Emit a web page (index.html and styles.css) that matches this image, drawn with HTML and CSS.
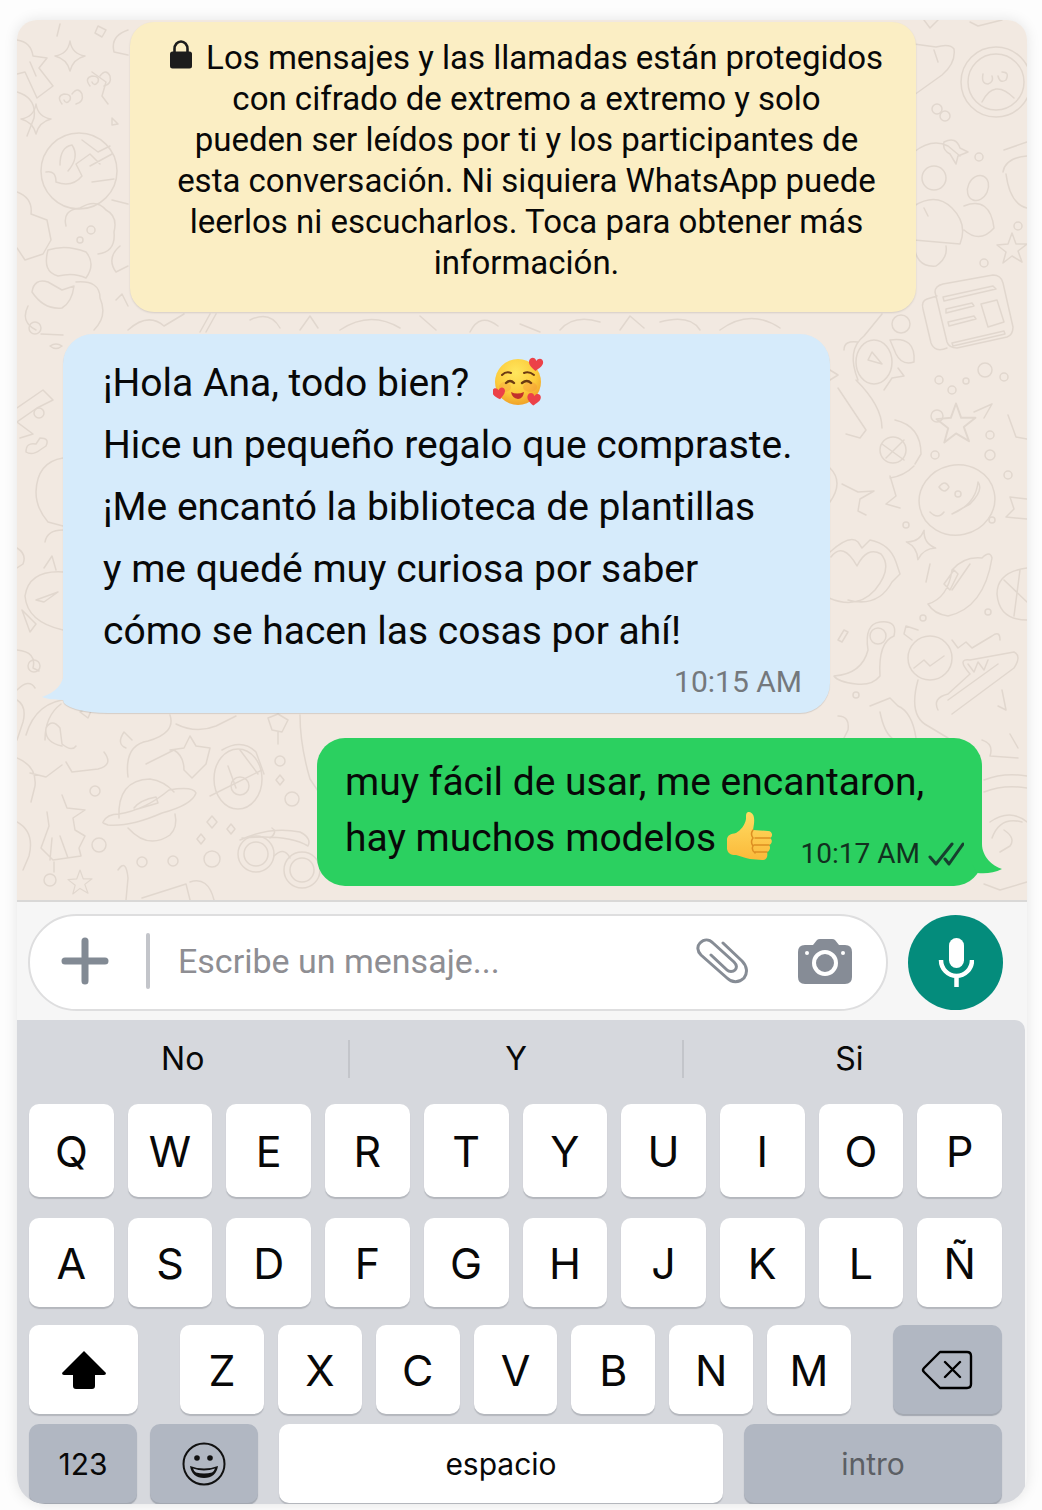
FILE: index.html
```html
<!DOCTYPE html>
<html lang="es">
<head>
    <meta charset="UTF-8">
    <meta name="viewport" content="width=device-width, initial-scale=1.0">
    <title>Chat</title>
    <link rel="stylesheet" href="styles.css">
</head>
<body>
    <main class="phone">
        <!-- Conversación -->
        <section class="chat">
            <svg class="chat-doodles" viewBox="17 20 1010 881" preserveAspectRatio="xMinYMin slice" aria-hidden="true">
                <defs>
                    <path id="star" d="M0-15-4-4-15-3-6 4-9 15 0 8 10 14 6 3 15-4 4-4Z"/>
                    <path id="spark" d="M0-15Q2-2 15 0 3 3 0 15-3 3-15 0-2-2 0-15Z"/>
                    <path id="curl" d="M-8 6q-6-8 2-10 8 0 6 6-4 5-6 0M2-4q6-8 10 0 2 8-6 10"/>
                </defs>
                <!-- Izquierda -->
                <use href="#spark" x="70" y="56"/>
                <path d="M17 40q14 2 16 16l14 2-8 10 14 18-16 12-12-26-8 2M60 24l-3 12M98 26l8 4-4 7-7-4ZM128 30q-18 6-14 22l14 3M30 62l6 14M17 92q20 6 17 26l-7 18"/>
                <use href="#spark" x="36" y="119"/>
                <use href="#curl" x="70" y="98"/>
                <use href="#curl" x="98" y="80"/>
                <path d="M92 72l14 10-4 14 6 8M112 118l6 6-6 1Z"/>
                <circle cx="79" cy="171" r="38"/>
                <path d="M46 172q10-2 10 10 16 6 26-6l-6-12 14-10 10 10M60 165q0-18 12-20 8 12-4 26M82 140l16 12 12-6M90 166l22-12M92 182l22-3"/>
                <path d="M66 226q-4-16 14-18 16-10 26 2 12 6 8 22 2 20-16 22M17 192q16 6 14 22l16 6 4 20-8 14-18 6-8-12M48 250q-6 22 10 26 16-4 28 2 10-14 0-26-20-8-38-2ZM112 200l16 4M120 246q-14 12-4 26l12-6M32 292q2-14 16-10l14 8 12-4q-2 16-12 22-18 2-30-16ZM76 282q24-2 24 16 8 18-6 32M28 306q-8 16 8 24M116 300l6-6 6 12"/>
                <circle cx="91" cy="230" r="4"/>
                <circle cx="80" cy="240" r="3"/>
                <circle cx="35" cy="328" r="6"/>
                <path d="M41 334l22 1M50 346q6-4 12 0-6 5-12 0ZM17 408l26-18 10 10-16 8-20 14 16 12-13 4M40 450q-8 6-14 2 0-10 10-8l4-6q10 0 6 8ZM63 458q-26 4-27 34 0 16 12 30l15 4M63 530q-16 0-18 12M17 548q10 6 6 16l-6 4M44 568l8-12 4 14M63 572q-34-2-38 24 2 26 38 34M36 600l22-8-14 10ZM22 610l14 14-6 8ZM17 650q20 2 16 18l6 3M17 690q12-12 18-2"/>
                <circle cx="39" cy="413" r="5"/>
                <circle cx="34" cy="666" r="6"/>
                <path d="M128 330q20-18 36-4l20-12M210 314l-10 18M216 314l-10 18M250 320q20-10 30 8M300 330l10-14 8 12M340 330q30-20 60-2M420 316l16 14M470 332q10-20 28-6M520 324l20 8M560 330q14-16 40-8M620 330l10-14 14 12M660 322q30-8 40 8M720 330q30-22 60-2"/>
                <!-- Abajo -->
                <path d="M26 735q10-34 44-36 14 2 28 10M45 740q0-24 16-36M62 746q-18-4-16-18 6-10 14 0l2 16q10 8 14 2M17 700q10 6 6 22l-6 18M66 762l6 10 26-3q16-4 6-17M62 765l-16 12-16-4M17 758q20 8 18 28l-4 16M80 712l14-8-6 14ZM170 715q6 18-22 26-24 4-20 36M146 764l28-14q10 6 10 20l8 8 14-14 4-16-14-2-6-10-6 12-14 2M176 724q20 10 40 2l20-10M300 715q0 30 10 64l8 12"/>
                <path d="M132 740l-8-8q-8 12 2 16"/>
                <circle cx="95" cy="791" r="5"/>
                <circle cx="99" cy="845" r="7"/>
                <circle cx="142" cy="862" r="5"/>
                <circle cx="173" cy="861" r="5"/>
                <circle cx="212" cy="859" r="8"/>
                <circle cx="280" cy="761" r="5"/>
                <circle cx="292" cy="799" r="7"/>
                <path d="M119 818q-2-38 31-39 14 2 24 13M128 828q20 22 42 7 8-8 5-21M103 822q4-8 16-8 26-4 50-24 24-4 27 3-4 12-34 20-32 14-54 12-6-2-5-3ZM134 808q6-8 22-11l2 6-24 7"/>
                <ellipse cx="238" cy="779" rx="24" ry="30"/>
                <path d="M210 796l52-26M222 750q20-12 34 2l8 22M240 750l18 24M228 766l8 22"/>
                <circle cx="240" cy="786" r="9"/>
                <path d="M62 795l5 13 18 2-12 8 2 12 10 6-6 12 2 8-28 4-12-12 8-22-2-14M60 836l8 22M52 838l-2 22"/>
                <circle cx="50" cy="880" r="6"/>
                <path d="M54 862v10M212 816l5 6-5 6-5-6ZM201 834l4 5-4 5-4-5ZM280 775l4 5-4 5-4-5ZM231 824l4 5-4 5-4-5ZM268 718l10-4 10 6-6 12-10-2ZM278 732v12"/>
                <circle cx="256" cy="854" r="18"/>
                <circle cx="256" cy="854" r="12"/>
                <circle cx="302" cy="870" r="18"/>
                <circle cx="302" cy="870" r="12"/>
                <path d="M240 840q30-14 60-8 12 6 8 14-20-12-66-8M274 856q10-10 16 2M118 870q8-12 10 8l-2 22M142 898l44-14 4 16M190 882q18-6 24 18M270 838q8-6 2-10M17 822q18 10 12 34l-6 14"/>
                <use href="#star" transform="translate(80 882) scale(.8)"/>
                <!-- Derecha -->
                <circle cx="996" cy="82" r="35"/>
                <circle cx="996" cy="82" r="28"/>
                <path d="M983 74q-2 10 5 10 6-2 4-8M998 76q2 8 8 4 4-8-4-8M982 102q12-24 32-4M914 44l22 3q14-4 18 2 2 14-12 26l-28 20M934 50l4 12M924 20l6 8 8-8M970 22l8 4 24-6"/>
                <circle cx="937" cy="109" r="5"/>
                <circle cx="945" cy="116" r="5"/>
                <circle cx="979" cy="157" r="4"/>
                <circle cx="934" cy="178" r="12"/>
                <ellipse cx="978" cy="188" rx="10" ry="13" transform="rotate(25 978 188)"/>
                <path d="M914 152q18-14 34-6l12 10M944 142q12-6 16 6l8 4-10 4-2 8-6-10q-8-4-6-12ZM914 206q22-14 38 2 16 16 8 36l-46-4M964 206q26-10 30 22-14 16-30 2M914 240q0 28 22 26 12-8 10-20M924 208l4 8M1004 150l23-8M1003 172q2-14 24-16M1006 174q4 30 21 34"/>
                <use href="#star" x="1012" y="248"/>
                <circle cx="1018" cy="226" r="4"/>
                <circle cx="984" cy="263" r="4"/>
                <path d="M935 292q0-6 8-8l50-9q8 0 10 8l10 44q0 8-6 10l-50 11q-8 0-10-6l-12-50ZM937 296l-10 3q-6 2-4 10l8 34q4 10 16 5M943 297l50-11 3 3-52 12ZM946 309l26-6 2 3-28 7ZM948 322l26-6 2 3-27 7ZM952 343l52-12 1 3-52 12ZM981 304l16-4 7 22-16 5Z"/>
                <circle cx="901" cy="324" r="9"/>
                <ellipse cx="874" cy="362" rx="18" ry="22"/>
                <path d="M858 380q-12-30 6-44l18-22M844 350q0-10 14-8M890 340q26-4 24 22-12 4-18-8ZM884 390l8-12 12-2-6-8M868 360l4-8 10 12ZM856 380q26 26 26 48M838 388l28 42-6 8-14-4M830 370l8 5-8 5"/>
                <circle cx="939" cy="380" r="4"/>
                <circle cx="952" cy="390" r="4"/>
                <circle cx="966" cy="381" r="3"/>
                <circle cx="985" cy="370" r="7"/>
                <circle cx="1004" cy="377" r="4"/>
                <circle cx="937" cy="416" r="6"/>
                <circle cx="990" cy="435" r="4"/>
                <circle cx="990" cy="455" r="5"/>
                <circle cx="935" cy="455" r="4"/>
                <circle cx="1008" cy="475" r="4"/>
                <use href="#star" transform="translate(956 423) scale(1.3)"/>
                <circle cx="893" cy="450" r="13"/>
                <path d="M895 420q26 6 26 34l-6 10M882 444l22 16M904 440l-18 18M984 418l8-14-18 8M1008 415l8 22 11 2M842 484l16 8 16-1-14 8-2 12 8 4M890 476l6 20-10 8 14 4M830 468q14 14 0 34M890 478q14-2 24-12"/>
                <ellipse cx="957" cy="500" rx="38" ry="35" transform="rotate(-12 957 500)"/>
                <path d="M952 514q24-10 26-32 6 8-8 22ZM939 487q6-8 10 0-4 8-10 0M930 512q8 8 14 0"/>
                <circle cx="958" cy="494" r="3"/>
                <path d="M1010 497l17 2M1010 497l4 12-8 8 21 2"/>
                <use href="#spark" x="921" y="545" transform="rotate(12 921 545)"/>
                <circle cx="906" cy="525" r="3"/>
                <circle cx="992" cy="520" r="3"/>
                <path d="M831 557q12-16 26 9 10-20 24-12 12 14-6 36-18 20-46 8M830 552q20-18 28-10l4 6 8-8q20 4 26 22l4 12-8 8q-14 26-44 18M928 604q20-6 24-34 12-14 30-12 8-8 10 0-8 50-44 58-14-2-20-12ZM952 590l18-26M944 584l10-14 4 4-8 16ZM930 564l-4 18M1027 568q-30 4-30 26 2 26 30 26M1004 580l23 22M1020 570l-6 46"/>
                <circle cx="923" cy="618" r="3"/>
                <circle cx="988" cy="612" r="3"/>
                <path d="M834 676q28-2 34-26-4-26 12-28 18-2 14 14-16 6-14 40-8 10-24 8-18-2-22-8ZM838 640l6-10 4 2-6 10Z"/>
                <circle cx="878" cy="636" r="8"/>
                <circle cx="930" cy="658" r="22"/>
                <path d="M912 640l-8-6 2-8 12 4M914 668l10-8 6 6 14-10M952 640l6 8 8-6 6 6 10-6 10-6q8-6 8 4M938 710q-6-12 10-16l22-20q-14-16 0-14l44-8q8 4 0 16l-62 46M948 700l50-36M968 664l6 8 4-10 6 8 4-10M870 706l20-8 8 8q14 6 18 32M880 712q4 20 12 26M918 680q-10 36 10 46l20 12M1002 690l4 20-8-4M838 716q12 0 10 14l-4 8"/>
                <circle cx="856" cy="695" r="3"/>
                <path d="M982 740q12 4 8 16l28 2M1010 734l8 14M984 780q20-8 43-4M984 792q20-8 43-4M990 822q20-14 37 0M992 838q8-22 30-16M1004 830q12 8 6 16l-10 6M984 884l16 6 27-8"/>
            </svg>

            <div class="notice">
                <svg class="notice-lock" viewBox="0 0 22 29" aria-hidden="true">
                    <path d="M4.500 13V9a6.500 7.500 0 0 1 13 0v4" fill="none" stroke="#1c1c1c" stroke-width="2.600"/>
                    <rect x="0" y="11.500" width="22" height="17" rx="2.500" fill="#1c1c1c"/>
                </svg>
                Los mensajes y las llamadas están protegidos<br>
                con cifrado de extremo a extremo y solo<br>
                pueden ser leídos por ti y los participantes de<br>
                esta conversación. Ni siquiera WhatsApp puede<br>
                leerlos ni escucharlos. Toca para obtener más<br>
                información.
            </div>

            <article class="bubble bubble-in">
                <p class="bubble-text">
                    ¡Hola Ana, todo bien?
                    <svg class="emoji" viewBox="0 0 52 50" role="img" aria-label="Cara sonriente con corazones">
                        <defs>
                            <radialGradient id="face" cx=".45" cy=".3" r=".75">
                                <stop offset="0" stop-color="#ffe75e"/>
                                <stop offset=".6" stop-color="#fccb3b"/>
                                <stop offset="1" stop-color="#ee9a25"/>
                            </radialGradient>
                            <path id="heart" d="M0 7C-4 4-8 1-7-3-6-7-1-7 0-3 2-7 7-6 7-2 7 2 3 4 0 7Z"/>
                        </defs>
                        <circle cx="25" cy="26" r="23" fill="url(#face)"/>
                        <ellipse cx="37" cy="31" rx="7" ry="5" fill="#f5923a" opacity=".4"/>
                        <ellipse cx="12" cy="31" rx="6" ry="5" fill="#f5923a" opacity=".3"/>
                        <g fill="none" stroke="#6b3a12" stroke-width="2" stroke-linecap="round">
                            <path d="M9 19q4-4 9-2M31 17q5-2 10 2"/>
                            <path d="M13 27q4-4 8 0M29 27q5-4 9 0" stroke-width="2.400"/>
                        </g>
                        <path d="M18 36q6 3 13 0-1 7-6 7-6-1-7-7Z" fill="#c2312b"/>
                        <g fill="#ec4148">
                            <use href="#heart" transform="translate(43 8) rotate(4)"/>
                            <use href="#heart" transform="translate(6 37) rotate(-10) scale(.9)"/>
                            <use href="#heart" transform="translate(41 43) rotate(6) scale(.95)"/>
                        </g>
                    </svg><br>
                    Hice un pequeño regalo que compraste.<br>
                    ¡Me encantó la biblioteca de plantillas<br>
                    y me quedé muy curiosa por saber<br>
                    cómo se hacen las cosas por ahí!
                </p>
                <time class="bubble-time">10:15 AM</time>
                <svg class="tail tail-in" viewBox="0 0 30 34" aria-hidden="true">
                    <path d="M22 0C22 14 14 22 0 27 8 30 16 30 30 30V0Z" fill="#d6ebfb"/>
                </svg>
            </article>

            <article class="bubble bubble-out">
                <p class="bubble-text">muy fácil de usar, me encantaron,</p>
                <div class="bubble-row">
                    <p class="bubble-text">
                        hay muchos modelos
                        <svg class="emoji" viewBox="0 0 52 50" role="img" aria-label="Pulgar hacia arriba">
                            <defs>
                                <linearGradient id="hand" x1="0" y1="0" x2="0" y2="1">
                                    <stop offset="0" stop-color="#ffdc62"/>
                                    <stop offset="1" stop-color="#fbb93a"/>
                                </linearGradient>
                            </defs>
                            <path d="M1 29C1 24 5 23 10 22 15 19 19 14 20 8 20 3 20 1 23 1 29 2 29 9 27 19L42 20C47 20 47 26 44 27 47 29 46 33 43 34 45 36 44 40 41 41 42 45 41 49 36 49L24 48C18 47 15 45 10 44 4 44 2 42 1 38Z" fill="url(#hand)"/>
                            <path d="M44 27H29M43 34H28M41 41H29M27 19q-3 4 0 8-3 4 0 8-2 4 2 7" fill="none" stroke="#dd8f22" stroke-width="1.500" stroke-linecap="round"/>
                        </svg>
                    </p>
                    <span class="bubble-meta">
                        <time>10:17 AM</time>
                        <svg class="ticks" viewBox="0 0 36 24" role="img" aria-label="Leído">
                            <path d="M2 15l6 7L24 2M17 17l4 5L35 2" fill="none" stroke="#17402f" stroke-width="3" stroke-linecap="round" stroke-linejoin="round"/>
                        </svg>
                    </span>
                </div>
                <svg class="tail tail-out" viewBox="0 0 30 30" aria-hidden="true">
                    <path d="M10 0C10 12 20 22 30 25 22 29 14 30 5 29L0 20V0Z" fill="#2bd060"/>
                </svg>
            </article>
        </section>

        <!-- Barra para escribir -->
        <form class="composer">
            <div class="composer-box">
                <button type="button" class="icon-btn" aria-label="Adjuntar">
                    <svg width="48" height="48" viewBox="0 0 48 48">
                        <path d="M24 4v40M4 24h40" stroke="#828a94" stroke-width="7" stroke-linecap="round"/>
                    </svg>
                </button>
                <span class="composer-line"></span>
                <input class="composer-input" type="text" placeholder="Escribe un mensaje..." aria-label="Escribe un mensaje">
                <button type="button" class="icon-btn" aria-label="Archivo">
                    <svg width="52" height="48" viewBox="0 0 52 48">
                        <path d="M27 6 46 24C51 29 52 36 48 41 43 46 36 46 31 41L5 18C1 14 1 9 4 6 8 2 13 2 17 6L38 25C41 28 41 31 39 33 37 35 33 35 31 33L15 18" fill="none" stroke="#868c95" stroke-width="3" stroke-linecap="round"/>
                    </svg>
                </button>
                <button type="button" class="icon-btn" aria-label="Cámara">
                    <svg width="54" height="46" viewBox="0 0 54 46">
                        <path d="M7 7h8l4-5q1-1 3-1h12q2 0 3 1l4 5h6q7 0 7 7v25q0 7-7 7H7q-7 0-7-7V14q0-7 7-7Z" fill="#868c96"/>
                        <circle cx="27" cy="25" r="11" fill="none" stroke="#fff" stroke-width="4"/>
                        <circle cx="9" cy="15" r="2" fill="#fff"/>
                        <circle cx="45" cy="15" r="2" fill="#fff"/>
                    </svg>
                </button>
            </div>
            <button type="button" class="mic-btn" aria-label="Grabar audio">
                <svg width="36" height="50" viewBox="0 0 36 50">
                    <rect x="11" y="0" width="15" height="30" rx="7.500" fill="#fff"/>
                    <path d="M3 22a15.500 16 0 0 0 31 0M18.500 38v11" fill="none" stroke="#fff" stroke-width="4.500"/>
                </svg>
            </button>
        </form>

        <!-- Teclado -->
        <section class="keyboard">
            <div class="suggestions">
                <button type="button">No</button>
                <button type="button">Y</button>
                <button type="button">Si</button>
            </div>
            <div class="key-row key-row-top">
                <button type="button" class="key">Q</button>
                <button type="button" class="key">W</button>
                <button type="button" class="key">E</button>
                <button type="button" class="key">R</button>
                <button type="button" class="key">T</button>
                <button type="button" class="key">Y</button>
                <button type="button" class="key">U</button>
                <button type="button" class="key">I</button>
                <button type="button" class="key">O</button>
                <button type="button" class="key">P</button>
            </div>
            <div class="key-row key-row-middle">
                <button type="button" class="key">A</button>
                <button type="button" class="key">S</button>
                <button type="button" class="key">D</button>
                <button type="button" class="key">F</button>
                <button type="button" class="key">G</button>
                <button type="button" class="key">H</button>
                <button type="button" class="key">J</button>
                <button type="button" class="key">K</button>
                <button type="button" class="key">L</button>
                <button type="button" class="key">Ñ</button>
            </div>
            <div class="key-row-shift">
                <button type="button" class="key" aria-label="Mayúsculas">
                    <svg width="44" height="38" viewBox="0 0 44 38">
                        <path d="M22 0 44 22q0 2-2 2h-9v11q0 3-3 3H14q-3 0-3-3V24H2q-2 0-2-2Z"/>
                    </svg>
                </button>
                <div class="key-row">
                    <button type="button" class="key">Z</button>
                    <button type="button" class="key">X</button>
                    <button type="button" class="key">C</button>
                    <button type="button" class="key">V</button>
                    <button type="button" class="key">B</button>
                    <button type="button" class="key">N</button>
                    <button type="button" class="key">M</button>
                </div>
                <button type="button" class="key key-dark" aria-label="Borrar">
                    <svg width="52" height="40" viewBox="0 0 52 40" fill="none" stroke="#000" stroke-width="2.400" stroke-linecap="round" stroke-linejoin="round">
                        <path d="M19 2h27q4 0 4 4v28q0 4-4 4H19L3 22q-2-2 0-4ZM24 12l15 15M39 12 24 27"/>
                    </svg>
                </button>
            </div>
            <div class="key-row-bottom">
                <div class="key-pair">
                    <button type="button" class="key key-dark key-label">123</button>
                    <button type="button" class="key key-dark" aria-label="Emojis">
                        <svg width="44" height="44" viewBox="0 0 44 44">
                            <circle cx="22" cy="22" r="20.500" fill="none" stroke="#111" stroke-width="2"/>
                            <circle cx="15" cy="16" r="2.800" fill="#111"/>
                            <circle cx="28" cy="16" r="2.800" fill="#111"/>
                            <path d="M8 24q14 5 28 0-2 12-14 12T8 24Z" fill="#111"/>
                            <path d="M11 26.500q11 4 22 0-1 3-3 4-8 2-16 0-2-1-3-4Z" fill="#b2b8c4"/>
                        </svg>
                    </button>
                </div>
                <button type="button" class="key key-label">espacio</button>
                <button type="button" class="key key-dark key-label key-enter">intro</button>
            </div>
        </section>
    </main>
</body>
</html>
```
FILE: styles.css
```css
/* Estilos base */
* {
    box-sizing: border-box;
}

body {
    margin: 0;
    padding: 20px 15px 6px 17px;
    background-color: #fdfdfd;
    font-family: Roboto, 'Liberation Sans', sans-serif;
    color: #080808;
}

button,
input {
    font-family: inherit;
    color: inherit;
    border: none;
    padding: 0;
    margin: 0;
    background: none;
}

button {
    cursor: pointer;
}

svg {
    display: block;
}

/* Contenedor principal */
.phone {
    border-radius: 20px 20px 28px 28px;
    overflow: hidden;
    background-color: #f6f6f6;
    box-shadow: 0 0 14px rgba(0, 0, 0, 0.1);
}

/* Conversación */
.chat {
    position: relative;
    display: flex;
    flex-direction: column;
    align-items: flex-start;
    padding: 2px 45px 14px 46px;
    background-color: #f2e9e1;
    border-bottom: 2px solid #d9d8d7;
}

.chat-doodles {
    position: absolute;
    top: 0;
    left: 0;
    width: 100%;
    height: 100%;
    fill: none;
    stroke: #e1d7ce;
    stroke-width: 1.5;
    stroke-linecap: round;
    stroke-linejoin: round;
}

/* Aviso de cifrado */
.notice {
    position: relative;
    align-self: center;
    width: 786px;
    max-width: 100%;
    padding: 15px 20px 29px 28px;
    border-radius: 24px;
    background-color: #fbeec4;
    box-shadow: 0 1px 2px rgba(0, 0, 0, 0.12);
    font-size: 33px;
    line-height: 41px;
    text-align: center;
}

.notice-lock {
    display: inline-block;
    width: 22px;
    height: 29px;
    margin-right: 6px;
}

/* Burbujas */
.bubble {
    position: relative;
    font-size: 39px;
}

.bubble-text {
    margin: 0;
}

.bubble-in {
    width: 767px;
    max-width: 100%;
    margin-top: 22px;
    padding: 18px 28px 12px 40px;
    border-radius: 30px 30px 30px 45px / 30px 30px 30px 13px;
    background-color: #d6ebfb;
    box-shadow: 0 1px 1px rgba(0, 0, 0, 0.12);
    line-height: 62px;
}

.bubble-time {
    display: block;
    text-align: right;
    font-size: 30px;
    line-height: 39px;
    color: #74787c;
}

.bubble-out {
    align-self: flex-end;
    width: 665px;
    max-width: 100%;
    margin-top: 25px;
    padding: 16px 18px 20px 28px;
    border-radius: 28px;
    background-color: #2bd060;
    line-height: 56px;
}

.bubble-row {
    display: flex;
    align-items: flex-end;
    justify-content: space-between;
}

.bubble-meta {
    display: flex;
    align-items: center;
    gap: 8px;
    font-size: 28px;
    line-height: 24px;
    white-space: nowrap;
    color: #12301f;
}

.emoji {
    display: inline-block;
    width: 52px;
    height: 50px;
    vertical-align: -10px;
}

.bubble-in .emoji {
    margin-left: 14px;
}

.ticks {
    width: 36px;
    height: 24px;
}

.tail {
    position: absolute;
    width: 30px;
}

.tail-in {
    left: -21px;
    bottom: 9px;
    height: 34px;
}

.tail-out {
    right: -20px;
    bottom: 12px;
    height: 30px;
}

/* Barra para escribir */
.composer {
    display: flex;
    align-items: center;
    gap: 20px;
    padding: 12px 24px 9px 11px;
}

.composer-box {
    flex: 1;
    display: flex;
    align-items: center;
    min-width: 0;
    height: 97px;
    padding: 0 34px 4px 31px;
    border: 2px solid #dededf;
    border-radius: 49px;
    background-color: #fff;
}

.icon-btn {
    flex: none;
}

.composer-line {
    width: 4px;
    height: 56px;
    margin: 0 28px 0 37px;
    border-radius: 2px;
    background-color: #c3c5ca;
}

.composer-input {
    flex: 1;
    min-width: 0;
    font-size: 34px;
    outline: none;
}

.composer-input::placeholder {
    color: #8e8e93;
    opacity: 1;
}

.composer-input + .icon-btn {
    margin-right: 50px;
}

.mic-btn {
    flex: none;
    display: flex;
    align-items: center;
    justify-content: center;
    width: 95px;
    height: 95px;
    border-radius: 50%;
    background-color: #048c7c;
}

/* Teclado */
.keyboard {
    margin-right: 2px;
    padding: 0 23px 1px 12px;
    border-top-right-radius: 10px;
    background-color: #d6d8dd;
    font-family: Inter, Roboto, sans-serif;
}

.suggestions {
    display: flex;
    margin: 0 -13px 0 -12px;
    padding: 20px 0 26px;
}

.suggestions button {
    flex: 1;
    height: 38px;
    font-size: 32px;
    line-height: 38px;
}

.suggestions button + button {
    border-left: 2px solid #c3c5ca;
}

.key-row {
    display: flex;
    gap: 14px;
}

.key-row-top .key {
    height: 93px;
}

.key-row-middle {
    margin-top: 21px;
}

.key {
    flex: 1;
    display: flex;
    align-items: center;
    justify-content: center;
    min-width: 0;
    height: 89px;
    border-radius: 10px;
    background-color: #fff;
    box-shadow: 0 2px 1px #b4b7bd;
    font-size: 43px;
}

.key-dark {
    background-color: #b1b7c2;
    box-shadow: 0 2px 1px #a3a8b1;
}

.key-row-shift {
    display: grid;
    grid-template-columns: 109fr 670fr 109fr;
    gap: 42px;
    margin-top: 18px;
}

.key-row-bottom {
    display: grid;
    grid-template-columns: 229fr 444fr 258fr;
    gap: 21px;
    margin-top: 10px;
}

.key-row-bottom .key {
    height: 79px;
}

.key-pair {
    display: flex;
    gap: 13px;
}

.key-label {
    font-size: 30px;
}

.key-enter {
    color: #5c5f64;
}
```
